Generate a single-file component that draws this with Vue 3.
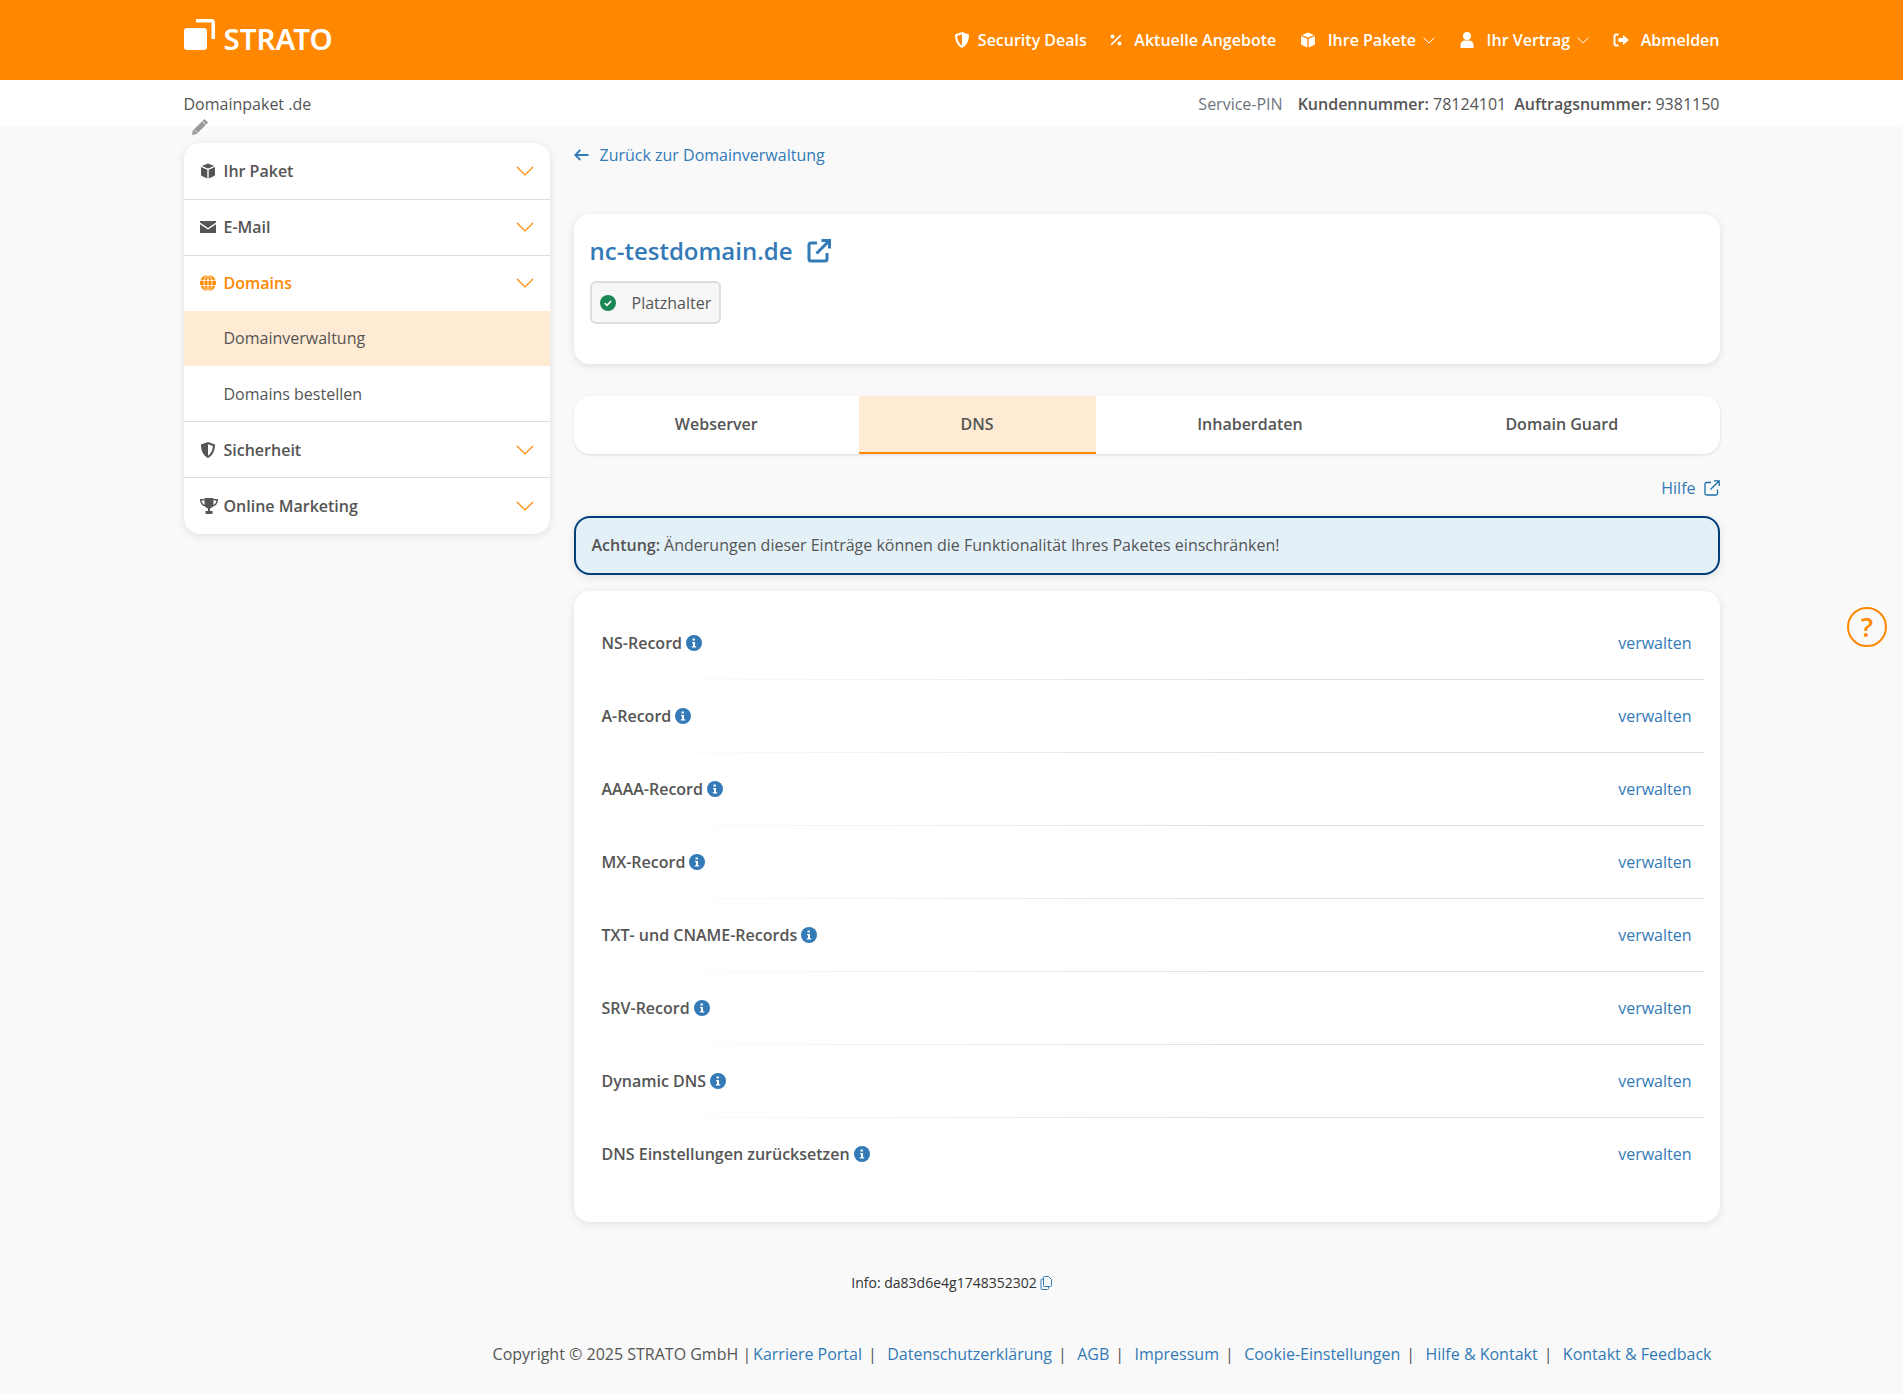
<template>
  <div class="page">
    <header class="top">
      <div class="wrap top_inner">
        <a class="logo">
          <svg class="logo_mark" viewBox="0 0 31 31">
            <path d="M0 12a3 3 0 0 1 3-3H20a3 3 0 0 1 3 3V28a3 3 0 0 1-3 3H3a3 3 0 0 1-3-3z" fill="#fff" />
            <path d="M12 0H27.500a3.500 3.500 0 0 1 3.500 3.500V20H27.500V3.500H12z" fill="#fff" />
          </svg>
          <span class="logo_text">STRATO</span>
        </a>
        <nav class="top_nav">
          <a class="top_link">
            <svg class="nav_icon nav_icon_tight" viewBox="0 0 16 16"><path fill-rule="evenodd" d="M8 0l7 2.600C15 8.800 12.700 13.600 8 16 3.300 13.600 1 8.800 1 2.600zM8 2.300L3.200 4.100C3.300 8.500 5 12 8 13.800z" fill="#fff" /></svg>
            Security Deals
          </a>
          <a class="top_link">
            <svg class="nav_icon nav_icon_small" viewBox="0 0 12 12"><path d="M10.300.6l1.100 1.100L1.700 11.400.6 10.300z" fill="#fff" /><circle cx="2.500" cy="2.500" r="2" fill="#fff" /><circle cx="9.500" cy="9.500" r="2" fill="#fff" /></svg>
            Aktuelle Angebote
          </a>
          <a class="top_link">
            <svg class="nav_icon" viewBox="0 0 16 16"><path :d="cube" fill="#fff" /></svg>
            Ihre Pakete
            <svg class="nav_caret" viewBox="0 0 12 7"><path d="M.5 .5L6 6l5.500-5.500" /></svg>
          </a>
          <a class="top_link">
            <svg class="nav_icon" viewBox="0 0 16 16"><circle cx="8" cy="4" r="4" fill="#fff" /><path d="M1.500 16v-3a4.500 4.500 0 0 1 4.500-4.500h4a4.500 4.500 0 0 1 4.500 4.500v3z" fill="#fff" /></svg>
            Ihr Vertrag
            <svg class="nav_caret" viewBox="0 0 12 7"><path d="M.5 .5L6 6l5.500-5.500" /></svg>
          </a>
          <a class="top_link">
            <svg class="nav_icon" viewBox="0 0 16 16"><path d="M5.500 2.500H3A1.500 1.500 0 0 0 1.500 4v8A1.500 1.500 0 0 0 3 13.500h2.500" fill="none" stroke="#fff" stroke-width="2" /><path d="M10 3l6 5-6 5v-3H5.500V6H10z" fill="#fff" /></svg>
            Abmelden
          </a>
        </nav>
      </div>
    </header>

    <div class="sub">
      <div class="wrap sub_inner">
        <div class="pkg">
          Domainpaket .de
          <svg class="pencil" viewBox="0 0 16 16"><path d="M12 .8l3.200 3.200L5 14.300 .8 15.200 1.700 11z" fill="#999" /><path d="M10.200 3l2.800 2.800M3 10.500l2.500 2.500" stroke="#f9f9f9" stroke-width=".8" /></svg>
        </div>
        <div class="ids">
          <span class="pin">Service-PIN</span>
          <span><b>Kundennummer:</b> 78124101</span>
          <span><b>Auftragsnummer:</b> 9381150</span>
        </div>
      </div>
    </div>

    <div class="wrap main">
      <aside class="side">
        <template v-for="item in side_items" :key="item.label">
          <a class="side_row" :class="{ side_active: item.active }">
            <svg class="side_icon" :class="{ side_icon_wide: item.wide }" :viewBox="item.box" v-html="item.icon"></svg>
            <span>{{ item.label }}</span>
            <svg class="side_caret" viewBox="0 0 18 10"><path d="M1 1l8 8 8-8" /></svg>
          </a>
          <div v-if="item.children" class="side_sub">
            <a v-for="child in item.children" :key="child.label" class="side_child" :class="{ child_active: child.active }">{{ child.label }}</a>
          </div>
        </template>
      </aside>

      <section class="content">
        <a class="back">
          <svg viewBox="0 0 15 12" class="back_icon"><path d="M14.500 6H1.500M6.300 1L1.300 6l5 5" /></svg>
          Zurück zur Domainverwaltung
        </a>

        <div class="card title_card">
          <div class="title_row">
            <a class="title">nc-testdomain.de</a>
            <svg class="title_ext" viewBox="0 0 24 24"><path d="M10 4H4a2 2 0 0 0-2 2v14a2 2 0 0 0 2 2h14a2 2 0 0 0 2-2v-6M9.500 14.500L22 2M14.500 1.500h8v8" /></svg>
          </div>
          <div class="chip">
            <svg class="chip_check" viewBox="0 0 16 16"><circle cx="8" cy="8" r="8" fill="#198754" /><path d="M4.800 8.200l2.200 2.100 4.200-4.300" fill="none" stroke="#fff" stroke-width="1.600" /></svg>
            Platzhalter
          </div>
        </div>

        <div class="tabs">
          <a v-for="tab in tabs" :key="tab" class="tab" :class="{ tab_active: tab === 'DNS' }">{{ tab }}</a>
        </div>

        <div class="help_row">
          <a class="help">
            Hilfe
            <svg class="help_ext" viewBox="0 0 16 16"><path d="M7 2.500H2.500a1.500 1.500 0 0 0-1.500 1.500v9.500a1.500 1.500 0 0 0 1.500 1.500H12a1.500 1.500 0 0 0 1.500-1.500V9.500M6.500 9.500L15 1M10 .8h5.200V6" /></svg>
          </a>
        </div>

        <div class="alert"><b>Achtung:</b> Änderungen dieser Einträge können die Funktionalität Ihres Paketes einschränken!</div>

        <div class="card list_card">
          <div v-for="record in records" :key="record" class="record">
            <span class="record_name">
              {{ record }}
              <svg class="info" viewBox="0 0 16 16"><circle cx="8" cy="8" r="8" fill="#337ab7" /><path d="M6.500 3.500h2.400v2H6.500zM6 7h3v4.200h1.200v1.300H5.800v-1.300H7V8.300H6z" fill="#fff" /></svg>
            </span>
            <a class="manage">verwalten</a>
          </div>
        </div>
      </section>
    </div>

    <div class="wrap">
      <div class="info_line">
        Info: da83d6e4g1748352302
        <svg class="copy" viewBox="0 0 12 14"><path d="M3.500 1.500a1 1 0 0 1 1-1h4l3 3v6a1 1 0 0 1-1 1h-6a1 1 0 0 1-1-1zM3.500 3H2a1 1 0 0 0-1 1v8.500a1 1 0 0 0 1 1h5.500a1 1 0 0 0 1-1v-1.500" /></svg>
      </div>

      <footer class="foot">
        <span class="copyright">Copyright © 2025 STRATO GmbH |</span>
        <template v-for="(link, i) in foot_links" :key="link">
          <a class="foot_link">{{ link }}</a>
          <span v-if="i < foot_links.length - 1" class="foot_sep">|</span>
        </template>
      </footer>
    </div>

    <a class="help_bubble">?</a>
  </div>
</template>

<script setup>
// three faces of a box, the gaps between them make the Y shape
const cube = 'M8 .4l6.200 2.500L8 5.500 1.800 2.900zM1 4.100l6.300 2.600v8.900L1.800 13a1.300 1.300 0 0 1-.8-1.200zM15 4.100l-6.300 2.600v8.900l5.500-2.600a1.300 1.300 0 0 0 .8-1.200z'

// icon markup for the side menu, drawn in currentColor
const side_items = [
  { label: 'Ihr Paket', box: '0 0 16 16', icon: `<path fill="currentColor" d="${cube}"/>` },
  {
    label: 'E-Mail',
    box: '0 0 16 16',
    icon: '<path fill="currentColor" d="M0 2h16v1.600L8 9 0 3.600zM0 5.200l8 5.400 8-5.400V14H0z"/>',
  },
  {
    label: 'Domains',
    box: '0 0 16 16',
    active: true,
    icon: '<circle cx="8" cy="8" r="8" fill="currentColor"/><g fill="none" stroke="#fff" stroke-width=".9"><path d="M0 5.300h16M0 10.700h16M8 0v16"/><ellipse cx="8" cy="8" rx="4" ry="8"/></g>',
    children: [{ label: 'Domainverwaltung', active: true }, { label: 'Domains bestellen' }],
  },
  {
    label: 'Sicherheit',
    box: '0 0 16 16',
    icon: '<path fill="currentColor" fill-rule="evenodd" d="M8 0l7 2.600C15 8.800 12.700 13.600 8 16 3.300 13.600 1 8.800 1 2.600zM8 2.300v11.500c3-1.800 4.700-5.300 4.800-9.700z"/>',
  },
  {
    label: 'Online Marketing',
    box: '0 0 18 16',
    wide: true,
    icon: '<path fill="currentColor" d="M4.500 0h9v6a4.500 4.500 0 0 1-3.500 4.400V13h2.500v3h-7v-3H8v-2.600A4.500 4.500 0 0 1 4.500 6z"/><path fill="none" stroke="currentColor" stroke-width="1.500" d="M4.500 1.800H.8c0 3.500 1.700 5.500 4.700 6M13.500 1.800h3.700c0 3.500-1.700 5.500-4.700 6"/>',
  },
]

const tabs = ['Webserver', 'DNS', 'Inhaberdaten', 'Domain Guard']

const records = [
  'NS-Record',
  'A-Record',
  'AAAA-Record',
  'MX-Record',
  'TXT- und CNAME-Records',
  'SRV-Record',
  'Dynamic DNS',
  'DNS Einstellungen zurücksetzen',
]

const foot_links = [
  'Karriere Portal',
  'Datenschutzerklärung',
  'AGB',
  'Impressum',
  'Cookie-Einstellungen',
  'Hilfe & Kontakt',
  'Kontakt & Feedback',
]
</script>

<style>
body {
  margin: 0;
  background: #f9f9f9;
}
</style>

<style scoped>
.page {
  position: relative;
  height: 1394px;
  overflow: hidden;
  font-family: "Open Sans", sans-serif;
  font-size: 16px;
  line-height: 24px;
  color: #555;
  background: #f9f9f9;
}
a {
  cursor: pointer;
}
.wrap {
  width: 1536px;
  margin: 0 auto;
}

/* header */
.top {
  height: 80px;
  background: #ff8800;
}
.top_inner {
  display: flex;
  justify-content: space-between;
  align-items: center;
  height: 80px;
}
.logo {
  display: flex;
  align-items: flex-end;
  gap: 9px;
  margin-top: -11px;
  color: #fff;
}
.logo_mark {
  width: 31px;
  height: 31px;
  display: block;
}
.logo_text {
  font-family: "Noto Sans", sans-serif;
  font-size: 29.500px;
  font-weight: 600;
  line-height: 22px;
  height: 22px;
}
.top_nav {
  display: flex;
  align-items: center;
  gap: 23.500px;
}
.top_link {
  display: flex;
  align-items: center;
  color: #fff;
  font-weight: 600;
  white-space: nowrap;
}
.nav_icon {
  width: 16px;
  height: 16px;
  margin-right: 12px;
}
.nav_icon_tight {
  margin-right: 8px;
}
.nav_icon_small {
  width: 12px;
}
.nav_caret {
  width: 12px;
  height: 7px;
  margin-left: 7px;
  fill: none;
  stroke: #fff;
  stroke-width: 1;
}

/* sub bar */
.sub {
  height: 47px;
  background: #fff;
}
.sub_inner {
  display: flex;
  justify-content: space-between;
  height: 47px;
  align-items: center;
}
.pkg {
  position: relative;
}
.pencil {
  position: absolute;
  left: 7px;
  top: 26px;
  width: 18px;
  height: 18px;
}
.ids {
  display: flex;
  gap: 8px;
}
.ids b {
  font-weight: 600;
}
.pin {
  color: #6c757d;
  margin-right: 7px;
}

/* layout */
.main {
  display: flex;
  gap: 24px;
  align-items: flex-start;
}

/* side menu */
.side {
  width: 366px;
  flex: none;
  margin-top: 16px;
  padding-bottom: 1px;
  background: #fff;
  border-radius: 16px;
  box-shadow: 0 2px 8px rgba(0, 0, 0, 0.1);
  overflow: hidden;
}
.side_row {
  display: flex;
  align-items: center;
  height: 56px;
  padding: 0 16px 1px;
  font-weight: 600;
  border-top: 1px solid #ddd;
  box-sizing: border-box;
}
.side_row:first-child {
  border-top: 0;
  padding-bottom: 0;
}
.side_sub ~ .side_row {
  padding-bottom: 0;
}
.side_active {
  color: #ff8800;
}
.side_icon {
  width: 16px;
  height: 16px;
  margin-right: 8px;
  flex: none;
}
.side_icon_wide {
  width: 18px;
  margin-right: 6px;
}
.side_caret {
  width: 18px;
  height: 10px;
  margin-left: auto;
  fill: none;
  stroke: #ff8800;
  stroke-width: 1.200;
}
.side_child {
  display: flex;
  align-items: center;
  height: 55px;
  padding-left: 40px;
}
.child_active {
  padding-bottom: 1px;
  box-sizing: border-box;
  background: #ffead4;
}

/* content column */
.content {
  flex: 1;
  min-width: 0;
}
.back {
  display: flex;
  align-items: center;
  margin-top: 16px;
  color: #337ab7;
}
.back_icon {
  width: 15px;
  height: 12px;
  margin-right: 11px;
  fill: none;
  stroke: #337ab7;
  stroke-width: 1.800;
}
.card {
  background: #fff;
  border-radius: 16px;
  box-shadow: 0 2px 8px rgba(0, 0, 0, 0.1);
}
.title_card {
  height: 150px;
  margin-top: 47px;
  padding: 20px 16px 0;
  box-sizing: border-box;
}
.title_row {
  display: flex;
  align-items: center;
  height: 34px;
}
.title {
  font-size: 24px;
  font-weight: 600;
  color: #337ab7;
}
.title_ext {
  width: 24px;
  height: 24px;
  margin-left: 14px;
  fill: none;
  stroke: #337ab7;
  stroke-width: 3;
}
.chip {
  display: inline-flex;
  align-items: center;
  height: 43px;
  margin-top: 13px;
  padding: 0 8px;
  box-sizing: border-box;
  background: #f7f7f7;
  border: 2px solid #ddd;
  border-radius: 6px;
}
.chip_check {
  width: 16px;
  height: 16px;
  margin-right: 16px;
}

/* tabs */
.tabs {
  display: flex;
  height: 58px;
  margin-top: 32px;
  background: #fff;
  border-radius: 16px;
  box-shadow: 0 1px 3px rgba(0, 0, 0, 0.12);
  overflow: hidden;
}
.tab {
  flex: 1 1 auto;
  display: flex;
  align-items: center;
  justify-content: center;
  padding-bottom: 2px;
  font-weight: 600;
}
.tab_active {
  padding-right: 1px;
  background: #ffead4;
  box-shadow: inset 0 -2px 0 #ff8800;
}

/* help link + alert */
.help_row {
  display: flex;
  justify-content: flex-end;
  margin-top: 22px;
}
.help {
  display: flex;
  align-items: center;
  color: #337ab7;
}
.help_ext {
  width: 16px;
  height: 16px;
  margin-left: 8px;
  fill: none;
  stroke: #1a6ea8;
  stroke-width: 1.300;
}
.alert {
  height: 59px;
  margin-top: 16px;
  padding: 0 16px 1px;
  box-sizing: border-box;
  display: flex;
  align-items: center;
  gap: 4px;
  background: #e3f0f8;
  border: 2px solid #003d79;
  border-radius: 16px;
  box-shadow: 0 2px 8px rgba(0, 0, 0, 0.1);
}
.alert b {
  font-weight: 600;
}

/* dns records */
.list_card {
  margin-top: 16px;
  padding: 16px 16px 31px;
}
.record {
  display: flex;
  justify-content: space-between;
  align-items: center;
  height: 73px;
  padding: 0 12px;
  box-sizing: border-box;
  border-bottom: 1px solid;
  border-image: linear-gradient(to right, #fff 2%, #e0e0e0 60%) 1;
}
.record:last-child {
  border-bottom: 0;
  padding-bottom: 1px;
}
.record_name {
  display: flex;
  align-items: center;
  gap: 4px;
  font-weight: 600;
}
.info {
  width: 16px;
  height: 16px;
}
.manage {
  color: #337ab7;
}

/* info + footer */
.info_line {
  display: flex;
  align-items: center;
  justify-content: center;
  gap: 3px;
  margin-top: 49px;
  font-size: 14px;
  color: #333;
}
.copy {
  width: 12px;
  height: 14px;
  fill: none;
  stroke: #337ab7;
  stroke-width: 1;
}
.foot {
  display: flex;
  justify-content: flex-end;
  margin-top: 47px;
  padding-right: 8px;
  white-space: nowrap;
}
.copyright {
  margin-right: -3.500px;
}
.foot_link {
  color: #337ab7;
  margin-left: 5.400px;
}
.foot_sep {
  margin: 0 5px 0 6px;
  color: #555;
}

.help_bubble {
  position: absolute;
  left: 1847px;
  top: 607px;
  width: 40px;
  height: 40px;
  box-sizing: border-box;
  display: flex;
  align-items: center;
  justify-content: center;
  border: 2px solid #ff8800;
  border-radius: 50%;
  color: #ff8800;
  font-size: 27px;
  font-weight: 600;
}
</style>
